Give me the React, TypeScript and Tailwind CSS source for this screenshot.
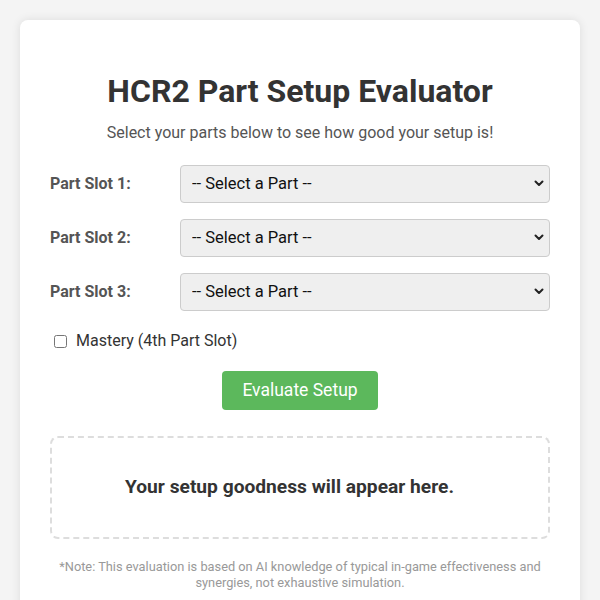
import React from "react";

function SlotRow({ n }: { n: number }) {
  return (
    <div className="flex items-center h-[38px]">
      <label className="w-[130px] shrink-0 text-[16px] font-bold text-[#555]">Part Slot {n}:</label>
      <div className="relative flex-1 h-[38px]">
        <select className="appearance-none w-full h-[38px] rounded-[4px] border border-[#ccc] bg-[#efefef] pl-[11px] text-[16.5px] text-[#111] outline-none">
          <option>-- Select a Part --</option>
        </select>
        <svg className="absolute right-[6px] top-[15px] pointer-events-none" width="10" height="7" viewBox="0 0 10 7">
          <path d="M1.5 1.5 L5 5 L8.5 1.5" fill="none" stroke="#222" strokeWidth="2" strokeLinecap="round" strokeLinejoin="round" />
        </svg>
      </div>
    </div>
  );
}

export default function App() {
  return (
    <div className="min-h-[600px] bg-[#f4f4f4] pt-[20px] px-[20px] pb-[20px]" style={{ fontFamily: "Roboto, 'Liberation Sans', sans-serif" }}>
      <div className="bg-white rounded-[8px] shadow-[0_0_10px_rgba(0,0,0,0.1)] px-[30px] pt-[52px] pb-[30px]">
        <h1 className="text-center text-[32px] leading-[38px] font-bold text-[#333]">HCR2 Part Setup Evaluator</h1>
        <p className="text-center text-[16px] leading-[22px] text-[#555] mt-[12px]">Select your parts below to see how good your setup is!</p>
        <div className="mt-[21px] flex flex-col gap-[16px]">
          <SlotRow n={1} />
          <SlotRow n={2} />
          <SlotRow n={3} />
        </div>
        <div className="mt-[20px] flex items-center pl-[4px] h-[20px]">
          <input type="checkbox" className="w-[13px] h-[13px] m-0" />
          <span className="ml-[9px] text-[16px] text-[#333]">Mastery (4th Part Slot)</span>
        </div>
        <div className="mt-[20px] flex justify-center">
          <button className="h-[39px] w-[156px] rounded-[4px] bg-[#5cb85c] text-white text-[17.5px]">Evaluate Setup</button>
        </div>
        <div className="mt-[26px] h-[103px] rounded-[8px] border-2 border-dashed border-[#ddd] flex items-center justify-center pr-[21px]">
          <p className="text-[19.2px] font-bold text-[#333]">Your setup goodness will appear here.</p>
        </div>
        <p className="mt-[20px] text-center text-[12.8px] leading-[16px] text-[#999] px-[4px]">*Note: This evaluation is based on AI knowledge of typical in-game effectiveness and synergies, not exhaustive simulation.</p>
      </div>
    </div>
  );
}
